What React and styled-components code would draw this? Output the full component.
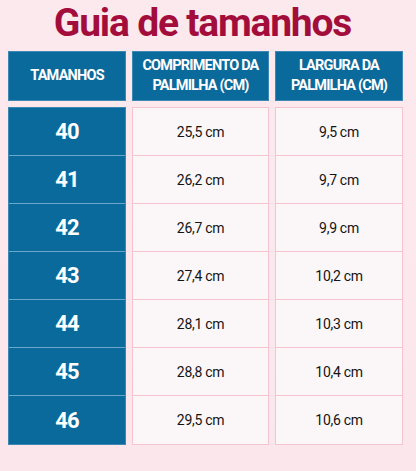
import React from 'react'
import styled, { createGlobalStyle } from 'styled-components'

const rows = [
    ['40', '25,5 cm', '9,5 cm'],
    ['41', '26,2 cm', '9,7 cm'],
    ['42', '26,7 cm', '9,9 cm'],
    ['43', '27,4 cm', '10,2 cm'],
    ['44', '28,1 cm', '10,3 cm'],
    ['45', '28,8 cm', '10,4 cm'],
    ['46', '29,5 cm', '10,6 cm'],
]

function App() {
    return (
        <Page>
            <GlobalStyle/>
            <Title>Guia de tamanhos</Title>
            <Table>
                <HeadCell>TAMANHOS</HeadCell>
                <HeadCell>COMPRIMENTO DA<br/>PALMILHA (CM)</HeadCell>
                <HeadCell>LARGURA DA<br/>PALMILHA (CM)</HeadCell>
                <SizeColumn>
                    {rows.map(r => <SizeCell key={r[0]}>{r[0]}</SizeCell>)}
                </SizeColumn>
                <ValueColumn>
                    {rows.map(r => <ValueCell key={r[0]}>{r[1]}</ValueCell>)}
                </ValueColumn>
                <ValueColumn>
                    {rows.map(r => <ValueCell key={r[0]}>{r[2]}</ValueCell>)}
                </ValueColumn>
            </Table>
        </Page>
    )
}

export default App

const GlobalStyle = createGlobalStyle`
    body {
        margin: 0;
        background: #fbe8ed;
    }
`

const Page = styled.div`
    width: 416px;
    height: 471px;
    box-sizing: border-box;
    padding: 0 8px;
    background: linear-gradient(180deg, #fce9ee 0%, #fbe6eb 100%);
    font-family: "Roboto", sans-serif;
`

const Title = styled.h1`
    margin: 0;
    height: 51px;
    padding-right: 11px;
    text-align: center;
    font-size: 39px;
    line-height: 47px;
    font-weight: bold;
    letter-spacing: -1.2px;
    color: #a30d3c;
`

const Table = styled.div`
    display: grid;
    grid-template-columns: 118px 137px 128px;
    grid-template-rows: 50px auto;
    column-gap: 6px;
    row-gap: 6px;
`

const HeadCell = styled.div`
    display: flex;
    align-items: center;
    justify-content: center;
    text-align: center;
    background: #0a6a9b;
    border: 1px solid #3d87b2;
    box-sizing: border-box;
    color: #fff;
    font-size: 14.5px;
    font-weight: bold;
    letter-spacing: -0.8px;
    line-height: 20px;
`

const SizeColumn = styled.div`
    display: flex;
    flex-direction: column;
    background: #0a6a9b;
    border: 1px solid #3d87b2;
`

const SizeCell = styled.div`
    height: 48px;
    box-sizing: border-box;
    display: flex;
    align-items: center;
    justify-content: center;
    color: #fff;
    font-size: 22px;
    font-weight: bold;
    letter-spacing: -0.8px;
    &:not(:last-child) {
        border-bottom: 1px solid #69a6c9;
    }
`

const ValueColumn = styled.div`
    display: flex;
    flex-direction: column;
    background: #fbf7f8;
    border: 1px solid #f6c3d3;
`

const ValueCell = styled.div`
    height: 48px;
    box-sizing: border-box;
    display: flex;
    align-items: center;
    justify-content: center;
    color: #141414;
    font-size: 14px;
    letter-spacing: -0.3px;
    &:not(:last-child) {
        border-bottom: 1px solid #f6c3d3;
    }
`
